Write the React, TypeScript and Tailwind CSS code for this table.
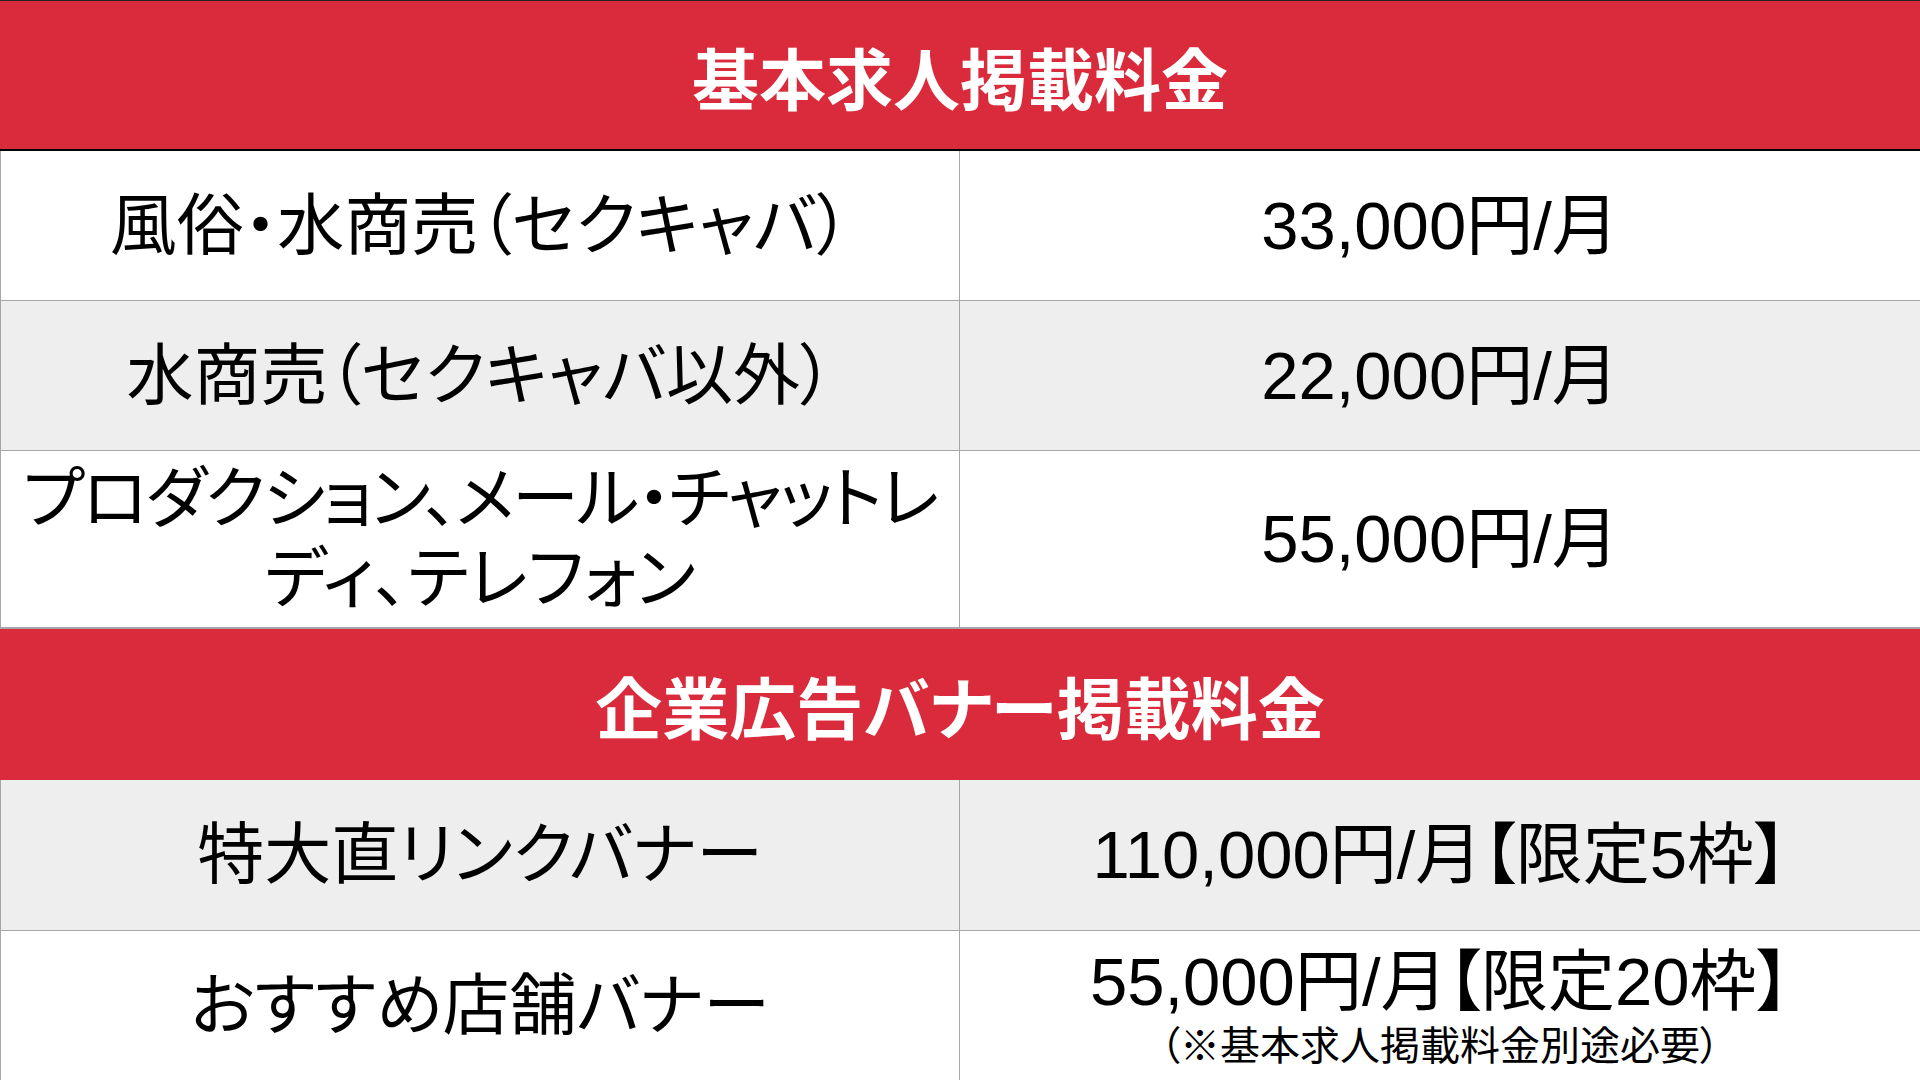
import React from "react";

const font = {
  fontFamily: '"Liberation Sans", "Noto Sans CJK JP", sans-serif',
};

function Header({ children, top }: { children: React.ReactNode; top?: boolean }) {
  return (
    <div
      className={
        "flex items-center justify-center bg-[#d92b3b] text-white font-bold text-[67px] leading-none " +
        (top ? "h-[151px] border-t border-t-[#222] border-b-2 border-b-black" : "h-[152px] border-t border-t-[#a6a6a6]")
      }
      style={{ fontFamily: '"Noto Sans CJK JP", sans-serif' }}
    >
      {children}
    </div>
  );
}

function Row({
  left,
  right,
  gray,
  h,
}: {
  left: React.ReactNode;
  right: React.ReactNode;
  gray?: boolean;
  h: string;
}) {
  return (
    <div
      className={
        "grid grid-cols-[960px_960px] border-b border-[#a6a6a6] " +
        h +
        (gray ? " bg-[#eeeeee]" : " bg-white")
      }
    >
      <div className="flex items-center justify-center border-l border-r border-[#a6a6a6] text-center text-[67px] leading-[80px] text-black whitespace-nowrap">
        {left}
      </div>
      <div className="flex flex-col items-center justify-center text-center text-[67px] leading-[80px] text-black whitespace-nowrap">
        {right}
      </div>
    </div>
  );
}

export default function App() {
  return (
    <div
      className="w-[1920px] h-[1080px] overflow-hidden bg-white"
      style={{ ...font, fontFeatureSettings: '"palt"' }}
    >
      <Header top>基本求人掲載料金</Header>
      <Row h="h-[150px]" left="風俗・水商売（セクキャバ）" right="33,000円/月" />
      <Row gray h="h-[150px]" left="水商売（セクキャバ以外）" right="22,000円/月" />
      <Row
        h="h-[177px]"
        left={
          <div className="flex flex-col items-center">
            <span className="block tracking-[-2px]">プロダクション、メール・チャットレ</span>
            <span className="block">ディ、テレフォン</span>
          </div>
        }
        right="55,000円/月"
      />
      <Header>企業広告バナー掲載料金</Header>
      <Row gray h="h-[151px]" left="特大直リンクバナー" right="110,000円/月【限定5枠】" />
      <Row
        h="h-[150px]"
        left="おすすめ店舗バナー"
        right={
          <>
            <span className="block leading-[80px]">55,000円/月【限定20枠】</span>
            <span className="block text-[40px] leading-[48px]">（※基本求人掲載料金別途必要）</span>
          </>
        }
      />
    </div>
  );
}
